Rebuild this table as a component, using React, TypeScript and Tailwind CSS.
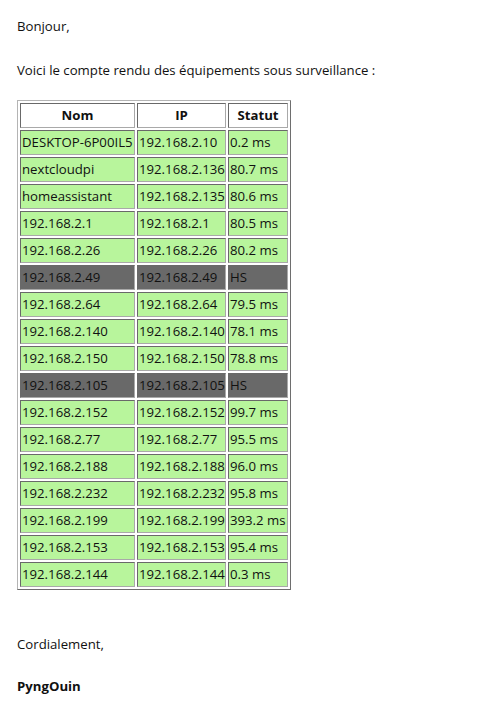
import React from "react";

type Row = { nom: string; ip: string; statut: string };

const rows: Row[] = [
  { nom: "DESKTOP-6P00IL5", ip: "192.168.2.10", statut: "0.2 ms" },
  { nom: "nextcloudpi", ip: "192.168.2.136", statut: "80.7 ms" },
  { nom: "homeassistant", ip: "192.168.2.135", statut: "80.6 ms" },
  { nom: "192.168.2.1", ip: "192.168.2.1", statut: "80.5 ms" },
  { nom: "192.168.2.26", ip: "192.168.2.26", statut: "80.2 ms" },
  { nom: "192.168.2.49", ip: "192.168.2.49", statut: "HS" },
  { nom: "192.168.2.64", ip: "192.168.2.64", statut: "79.5 ms" },
  { nom: "192.168.2.140", ip: "192.168.2.140", statut: "78.1 ms" },
  { nom: "192.168.2.150", ip: "192.168.2.150", statut: "78.8 ms" },
  { nom: "192.168.2.105", ip: "192.168.2.105", statut: "HS" },
  { nom: "192.168.2.152", ip: "192.168.2.152", statut: "99.7 ms" },
  { nom: "192.168.2.77", ip: "192.168.2.77", statut: "95.5 ms" },
  { nom: "192.168.2.188", ip: "192.168.2.188", statut: "96.0 ms" },
  { nom: "192.168.2.232", ip: "192.168.2.232", statut: "95.8 ms" },
  { nom: "192.168.2.199", ip: "192.168.2.199", statut: "393.2 ms" },
  { nom: "192.168.2.153", ip: "192.168.2.153", statut: "95.4 ms" },
  { nom: "192.168.2.144", ip: "192.168.2.144", statut: "0.3 ms" },
];

const cellBase =
  "border border-solid border-t-[#696969] border-l-[#696969] border-r-[#a9a9a9] border-b-[#a9a9a9] p-px h-[25px] whitespace-nowrap text-left align-middle leading-[21px]";

export default function App() {
  return (
    <div
      className="bg-white text-[#111111] text-[13.2px] leading-[21px] pl-[17px] pt-[16px] min-h-[719px]"
      style={{ fontFamily: '"Open Sans", "Noto Sans", sans-serif' }}
    >
      <div className="h-[21px]">Bonjour,</div>
      <div className="h-[21px] mt-[23px]">Voici le compte rendu des équipements sous surveillance :</div>
      <table className="mt-[19px] table-fixed w-[274px] border-separate border-spacing-[2px] border border-solid border-t-[#b4b4b4] border-l-[#b4b4b4] border-r-[#6e6e6e] border-b-[#6e6e6e]">
        <thead>
          <tr>
            <th className={`${cellBase} w-[115px] bg-white font-bold !text-center`}>Nom</th>
            <th className={`${cellBase} w-[89px] bg-white font-bold !text-center`}>IP</th>
            <th className={`${cellBase} w-[60px] bg-white font-bold !text-center`}>Statut</th>
          </tr>
        </thead>
        <tbody>
          {rows.map((r, i) => {
            const bg = r.statut === "HS" ? "bg-[#696969]" : "bg-[#b8f59c]";
            return (
              <tr key={i}>
                <td className={`${cellBase} ${bg}`}>{r.nom}</td>
                <td className={`${cellBase} ${bg}`}>{r.ip}</td>
                <td className={`${cellBase} ${bg}`}>{r.statut}</td>
              </tr>
            );
          })}
        </tbody>
      </table>
      <div className="h-[21px] mt-[44px]">Cordialement,</div>
      <div className="h-[21px] mt-[21px] font-bold">PyngOuin</div>
    </div>
  );
}
